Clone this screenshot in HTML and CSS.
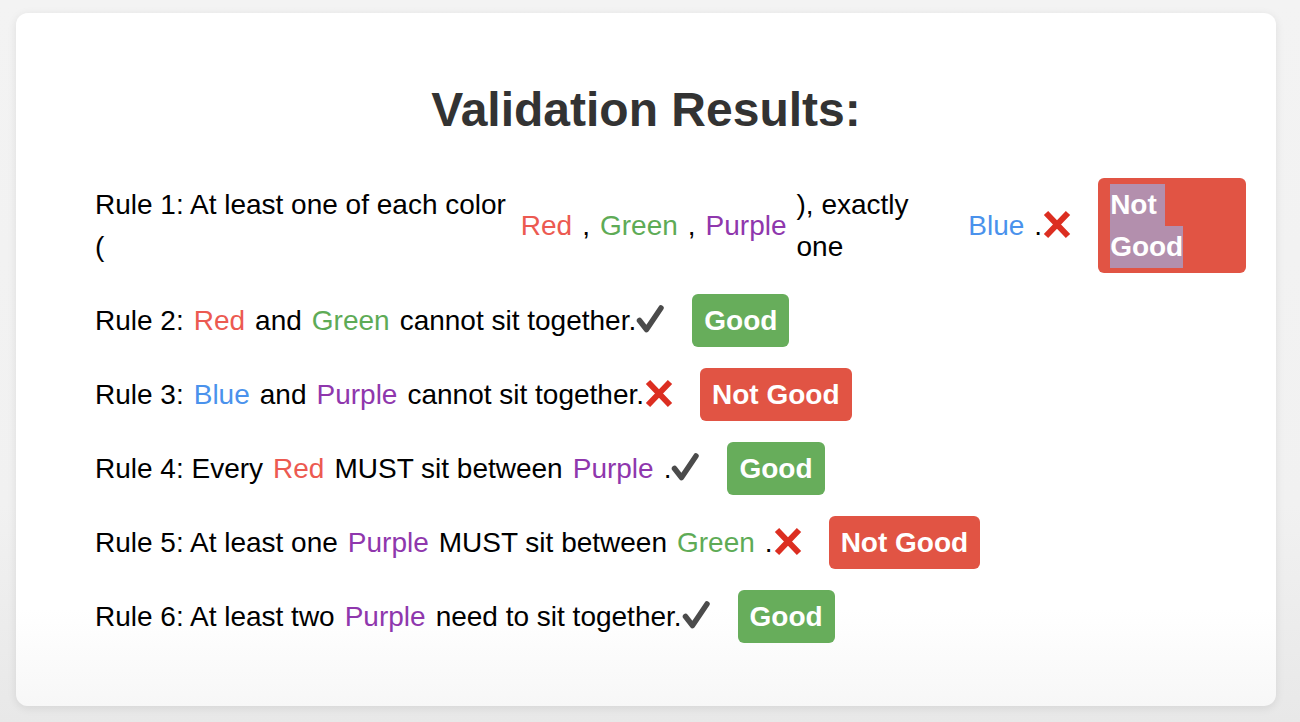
FILE: index.html
```html
<!DOCTYPE html>
<html lang="en">
<head>
<meta charset="utf-8">
<title>Validation Results</title>
<link rel="stylesheet" href="styles.css">
</head>
<body>
<div class="page">
  <div class="card">
    <h1 class="title">Validation Results:</h1>
    <ul class="rules">
      <li class="rule">
        <span class="txt">Rule 1: At least one of each color (</span>
        <span class="c red">Red</span>
        <span class="txt">,</span>
        <span class="c green">Green</span>
        <span class="txt">,</span>
        <span class="c purple">Purple</span>
        <span class="txt">), exactly one</span>
        <span class="c blue">Blue</span>
        <span class="end">.<svg class="icon" viewBox="0 0 32 30" width="32" height="30"><path class="cross" d="M4 4 L26 27 M26 4 L4 27"/></svg></span>
        <span class="badge bad"><span class="sel first">Not</span> <span class="sel">Good</span></span>
      </li>
      <li class="rule">
        <span class="txt">Rule 2:</span>
        <span class="c red">Red</span>
        <span class="txt">and</span>
        <span class="c green">Green</span>
        <span class="end">cannot sit together.<svg class="icon" viewBox="0 0 32 30" width="32" height="30"><path class="check" d="M3.5 16.5 L10.5 25.5 L25 4"/></svg></span>
        <span class="badge good">Good</span>
      </li>
      <li class="rule">
        <span class="txt">Rule 3:</span>
        <span class="c blue">Blue</span>
        <span class="txt">and</span>
        <span class="c purple">Purple</span>
        <span class="end">cannot sit together.<svg class="icon" viewBox="0 0 32 30" width="32" height="30"><path class="cross" d="M4 4 L26 27 M26 4 L4 27"/></svg></span>
        <span class="badge bad">Not Good</span>
      </li>
      <li class="rule">
        <span class="txt">Rule 4: Every</span>
        <span class="c red">Red</span>
        <span class="txt">MUST sit between</span>
        <span class="c purple">Purple</span>
        <span class="end">.<svg class="icon" viewBox="0 0 32 30" width="32" height="30"><path class="check" d="M3.5 16.5 L10.5 25.5 L25 4"/></svg></span>
        <span class="badge good">Good</span>
      </li>
      <li class="rule">
        <span class="txt">Rule 5: At least one</span>
        <span class="c purple">Purple</span>
        <span class="txt">MUST sit between</span>
        <span class="c green">Green</span>
        <span class="end">.<svg class="icon" viewBox="0 0 32 30" width="32" height="30"><path class="cross" d="M4 4 L26 27 M26 4 L4 27"/></svg></span>
        <span class="badge bad">Not Good</span>
      </li>
      <li class="rule">
        <span class="txt">Rule 6: At least two</span>
        <span class="c purple">Purple</span>
        <span class="end">need to sit together.<svg class="icon" viewBox="0 0 32 30" width="32" height="30"><path class="check" d="M3.5 16.5 L10.5 25.5 L25 4"/></svg></span>
        <span class="badge good">Good</span>
      </li>
    </ul>
  </div>
</div>
</body>
</html>
```

FILE: styles.css
```css
html, body {
  margin: 0;
  padding: 0;
}

body {
  background: linear-gradient(to bottom, #f3f3f3 0%, #f1f1f1 70%, #e8e8e8 100%);
  min-height: 722px;
  font-family: "Liberation Sans", Arial, Helvetica, sans-serif;
}

.page {
  padding: 13px 24px 16px 16px;
}

.card {
  background: linear-gradient(to bottom, #ffffff 0%, #ffffff 86%, #f7f7f7 100%);
  border-radius: 12px;
  box-shadow: 0 2px 10px rgba(0, 0, 0, 0.09);
  padding: 30px 30px 63px 30px;
}

.title {
  margin: 39px 0 40px;
  font-size: 48px;
  line-height: 56px;
  font-weight: bold;
  text-align: center;
  color: #333333;
}

.rules {
  list-style: none;
  margin: 0;
  padding: 0 0 0 49px;
  display: flex;
  flex-direction: column;
  gap: 21px;
}

.rule {
  display: flex;
  align-items: center;
  gap: 10px;
  font-size: 28px;
  line-height: 42px;
  color: #000000;
}

.c {
  white-space: nowrap;
}

.red { color: #ec5a51; }
.green { color: #5eab56; }
.purple { color: #8f37ad; }
.blue { color: #4a92ec; }

.end {
  white-space: nowrap;
  flex-shrink: 0;
}

.icon {
  vertical-align: -4px;
}

.check {
  fill: none;
  stroke: #4b4b4b;
  stroke-width: 5.5;
  stroke-linecap: round;
  stroke-linejoin: round;
}

.cross {
  fill: none;
  stroke: #dc2e21;
  stroke-width: 6;
  stroke-linecap: butt;
}

.badge {
  color: #ffffff;
  font-weight: bold;
  padding: 5.5px 12px;
  border-radius: 6px;
  margin-left: 14px;
  line-height: 42px;
}

.good { background: #67ad5b; }
.bad { background: #e15444; }

.sel {
  display: inline-block;
  background: #b38fad;
  line-height: 42px;
}

.sel.first {
  padding-right: 0.278em;
  margin-right: -0.278em;
}
```
